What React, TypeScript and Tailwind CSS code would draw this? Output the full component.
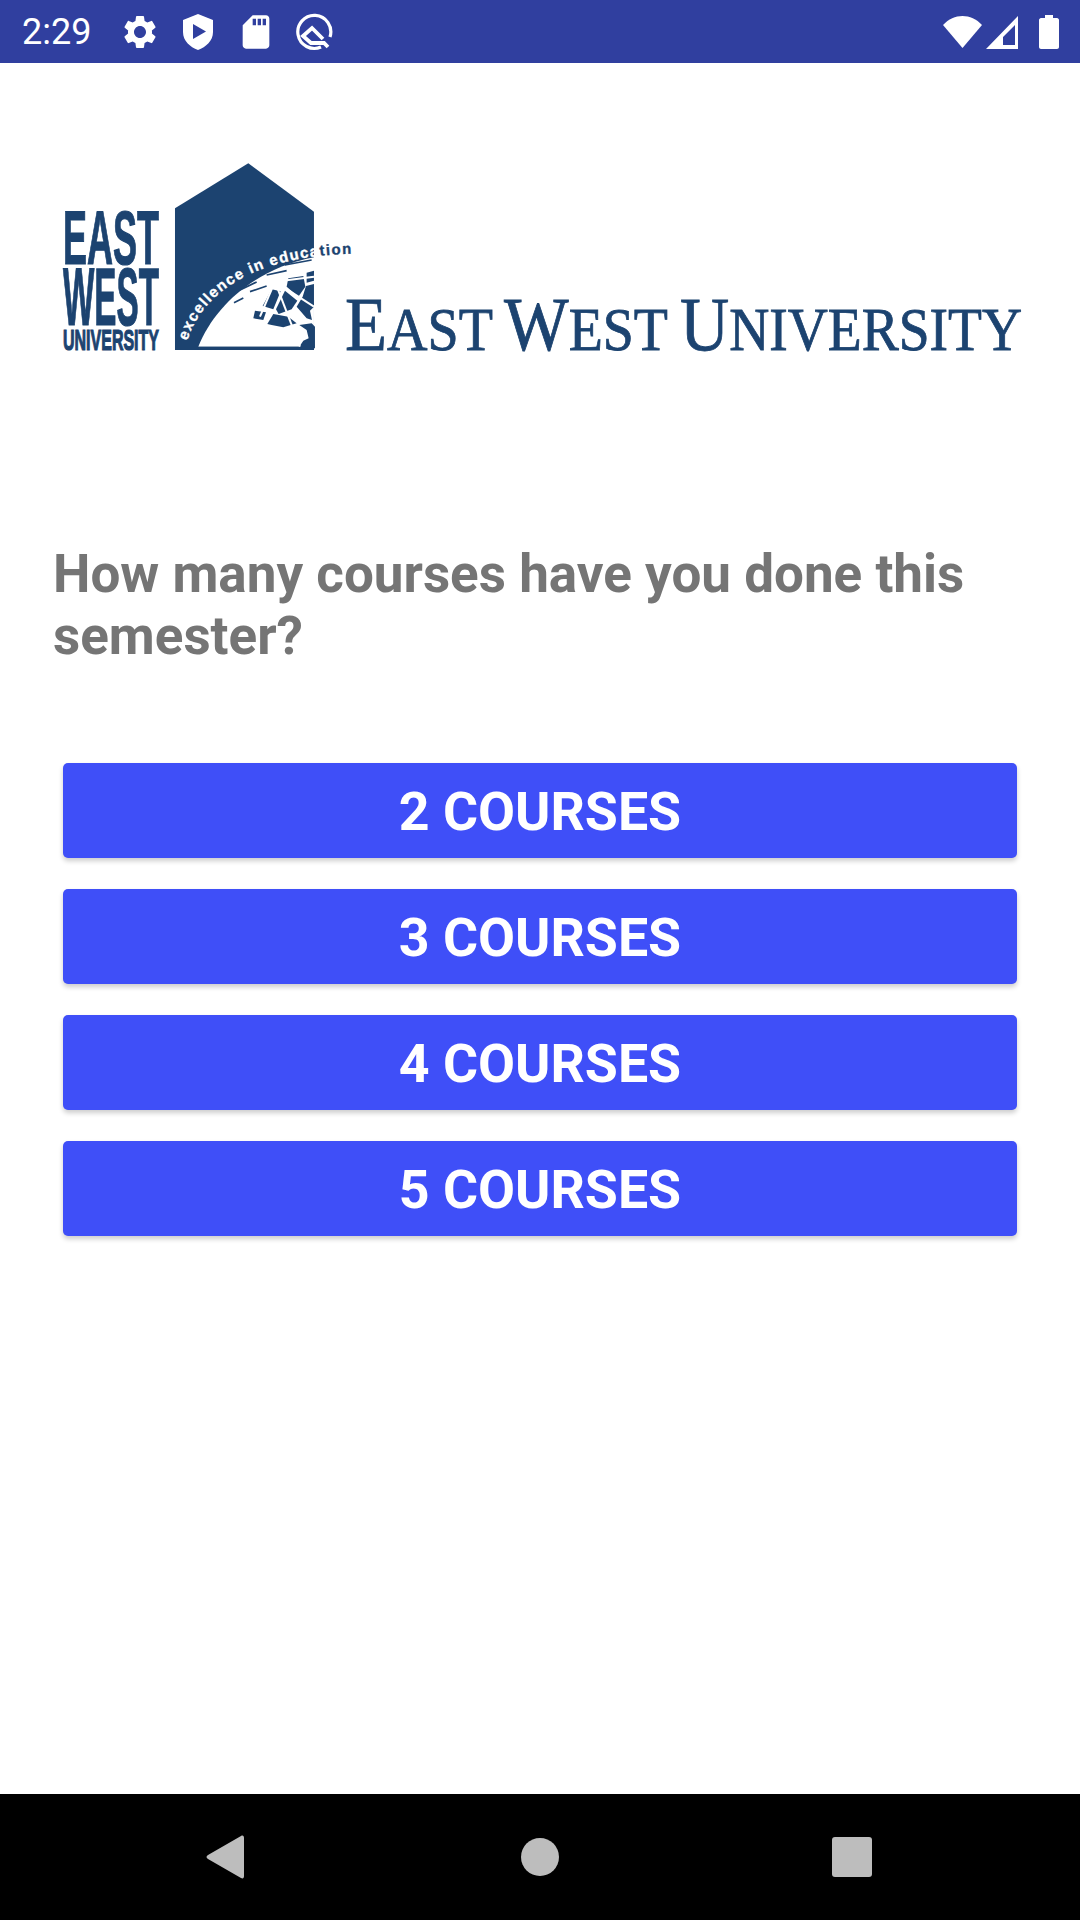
import React from 'react';

const courses = ['2 COURSES', '3 COURSES', '4 COURSES', '5 COURSES'];

const StatusBar: React.FC = () => {
  return (
    <div className="h-[63px] bg-[#303f9f] flex items-center text-white">
      <span className="ml-[22px] w-[98px] text-[36px] leading-none font-['Roboto',sans-serif]">2:29</span>
      <div className="flex gap-[18px]">
        <svg className="w-10 h-10" viewBox="0 0 24 24" fill="currentColor">
          <path d="M19.14 12.94c.04-.3.06-.61.06-.94 0-.32-.02-.64-.07-.94l2.03-1.58a.49.49 0 0 0 .12-.61l-1.92-3.32a.488.488 0 0 0-.59-.22l-2.39.96c-.5-.38-1.03-.7-1.62-.94l-.36-2.54a.484.484 0 0 0-.48-.41h-3.84c-.24 0-.43.17-.47.41l-.36 2.54c-.59.24-1.13.57-1.62.94l-2.39-.96c-.22-.08-.47 0-.59.22L2.74 8.87c-.12.21-.08.47.12.61l2.03 1.58c-.05.3-.09.63-.09.94s.02.64.07.94l-2.03 1.58a.49.49 0 0 0-.12.61l1.92 3.32c.12.22.37.29.59.22l2.39-.96c.5.38 1.03.7 1.62.94l.36 2.54c.05.24.24.41.48.41h3.84c.24 0 .44-.17.47-.41l.36-2.54c.59-.24 1.13-.56 1.62-.94l2.39.96c.22.08.47 0 .59-.22l1.92-3.32c.12-.22.07-.47-.12-.61l-2.01-1.58zM12 15.6c-1.98 0-3.6-1.62-3.6-3.6s1.62-3.6 3.6-3.6 3.6 1.62 3.6 3.6-1.62 3.6-3.6 3.6z" />
        </svg>
        <svg className="w-10 h-10" viewBox="0 0 40 40" fill="currentColor">
          <path fillRule="evenodd" d="M20 2 L35 8 V20 C35 29 28 35 20 38 C12 35 5 29 5 20 V8 Z M15 12 V27 L28 19.5 Z" />
        </svg>
        <svg className="w-10 h-10" viewBox="0 0 24 24" fill="currentColor">
          <path d="M18 2h-8L4.02 8 4 20c0 1.1.9 2 2 2h12c1.1 0 2-.9 2-2V4c0-1.1-.9-2-2-2zm-6 6h-2V4h2v4zm3 0h-2V4h2v4zm3 0h-2V4h2v4z" />
        </svg>
        <svg className="w-10 h-10" viewBox="0 0 40 40" fill="none" stroke="currentColor">
          <path strokeWidth="3.2" d="M27 35 A16.5 16.5 0 1 1 36 25" />
          <path strokeWidth="3.8" d="M29 27 L18 16 L9 24 L17 31 H30 L34 35" />
        </svg>
      </div>
      <div className="ml-auto flex items-center">
        <svg className="w-10 h-[34px]" viewBox="0 0 40 34" fill="currentColor">
          <path d="M0 10 C11 -2 28 -2 39 10 L19.5 33 Z" />
        </svg>
        <svg className="w-[36px] h-[34px] ml-[2px]" viewBox="0 0 36 34" fill="currentColor">
          <path fillRule="evenodd" d="M1 34 L33 1 V34 Z M18 30 H30 V10 L18 22 Z" />
        </svg>
        <svg className="w-[22px] h-[36px] ml-[17px] mr-[20px]" viewBox="0 0 22 36" fill="currentColor">
          <path d="M7 1 H15 V4 H19 C20 4 21 5 21 6 V33 C21 34 20 35 19 35 H3 C2 35 1 34 1 33 V6 C1 5 2 4 3 4 H7 Z" />
        </svg>
      </div>
    </div>
  );
};

// coordinates of the crest are in 3x units, the group scales them back down
const Logo: React.FC = () => {
  return (
    <svg className="block ml-[60px] mt-[97px]" width="966" height="194" viewBox="60 160 966 194">
      <g fill="#1c4370" stroke="#1c4370" strokeWidth="1.2" fontFamily="'Liberation Sans',sans-serif" fontWeight="700">
        <text x="63" y="264" fontSize="76" textLength="96" lengthAdjust="spacingAndGlyphs">EAST</text>
        <text x="63" y="325" fontSize="82" textLength="96" lengthAdjust="spacingAndGlyphs">WEST</text>
        <text x="63" y="350" fontSize="29" textLength="96" lengthAdjust="spacingAndGlyphs">UNIVERSITY</text>
      </g>
      <g transform="translate(40 150) scale(0.3333)">
        <path fill="#1c4370" d="M405 600 V175 L625 40 L822 185 V600 Z" />
        <path fill="#fff" d="M475 590 C525 465 650 355 822 322 V590 Z" />
        <g fill="#1c4370">
          <path d="M645 482 L678 487 L670 510 L640 505 Z" />
          <path d="M695 418 L722 424 L700 478 L668 468 Z" />
          <path d="M735 422 L772 452 L755 478 L716 492 L708 478 Z" />
          <path d="M745 385 L790 378 L796 410 L775 440 L740 410 Z" />
          <path d="M800 368 L822 362 V392 L800 398 Z" />
          <path d="M798 408 L822 402 V470 L810 482 L816 510 L800 505 L770 470 L788 440 Z" />
          <path d="M682 522 L700 492 L745 500 L770 520 L730 532 L695 525 Z" />
          <path d="M778 525 L815 520 L825 530 V595 L775 595 L790 572 L806 565 L800 540 Z" />
          <path d="M475 590 H822 V600 H475 Z" />
        </g>
        <g stroke="#fff" strokeWidth="6" fill="none">
          <path d="M705 395 L780 590" />
          <path d="M705 395 L822 470" />
          <path d="M705 395 L660 500" />
          <path d="M705 395 L822 380" />
          <circle cx="705" cy="395" r="12" fill="#fff" />
        </g>
        <g stroke="#1c4370" strokeWidth="5" fill="none">
          <path d="M582 458 L610 444" />
          <path d="M600 420 L650 396" />
          <path d="M630 425 L680 408" />
          <path d="M660 362 L720 345" />
          <path d="M735 345 L815 330" />
          <path d="M680 375 L740 362" />
        </g>
        <text fontFamily="'Liberation Sans',sans-serif" fontWeight="700" fontSize="45" letterSpacing="4.1" fill="#fff" stroke="#fff" strokeWidth="1">
          <textPath href="#crest-arc">
            excellence in educa<tspan fill="#1c4370" stroke="#1c4370">tion</tspan>
          </textPath>
        </text>
        <path id="crest-arc" fill="none" d="M442 572 C480 440 640 300 1000 312" />
      </g>
      <g fill="#1c4370" stroke="#1c4370" strokeWidth="0.8" fontFamily="'Liberation Serif',serif">
        <text x="345" y="350" textLength="148" lengthAdjust="spacingAndGlyphs" fontSize="62">
          <tspan fontSize="76">E</tspan>AST
        </text>
        <text x="504" y="350" textLength="164" lengthAdjust="spacingAndGlyphs" fontSize="62">
          <tspan fontSize="76">W</tspan>EST
        </text>
        <text x="680" y="350" textLength="342" lengthAdjust="spacingAndGlyphs" fontSize="62">
          <tspan fontSize="76">U</tspan>NIVERSITY
        </text>
      </g>
    </svg>
  );
};

const NavBar: React.FC = () => {
  return (
    <div className="h-[126px] bg-black relative">
      <svg className="absolute left-[205px] top-[40px]" width="40" height="46" viewBox="0 0 40 46" fill="#bdbdbd">
        <path d="M36 2 C38 1 39 2 39 4 V42 C39 44 38 45 36 44 L3 25 C1 24 1 22 3 21 Z" />
      </svg>
      <div className="absolute left-[521px] top-[44px] w-[38px] h-[38px] rounded-full bg-[#bdbdbd]" />
      <div className="absolute left-[832px] top-[43px] w-[40px] h-[40px] rounded-[3px] bg-[#bdbdbd]" />
    </div>
  );
};

const App: React.FC = () => {
  return (
    <div className="w-[1080px] h-[1920px] flex flex-col bg-white font-['Roboto',sans-serif]">
      <StatusBar />
      <main className="flex-1">
        <Logo />
        <h1 className="mt-[189px] ml-[53px] mr-[54px] text-[53px] leading-[62px] font-bold text-[#757575]">
          How many courses have you done this semester?
        </h1>
        <div className="mt-[96px] mx-[63px] flex flex-col gap-[31px]">
          {courses.map((label) => (
            <button
              key={label}
              className="h-[95px] pt-[4px] rounded-[5px] bg-[#3f4ff8] text-white text-[53.7px] font-bold shadow-[0_3px_5px_rgba(0,0,0,0.2)]"
            >
              {label}
            </button>
          ))}
        </div>
      </main>
      <NavBar />
    </div>
  );
};

export default App;
